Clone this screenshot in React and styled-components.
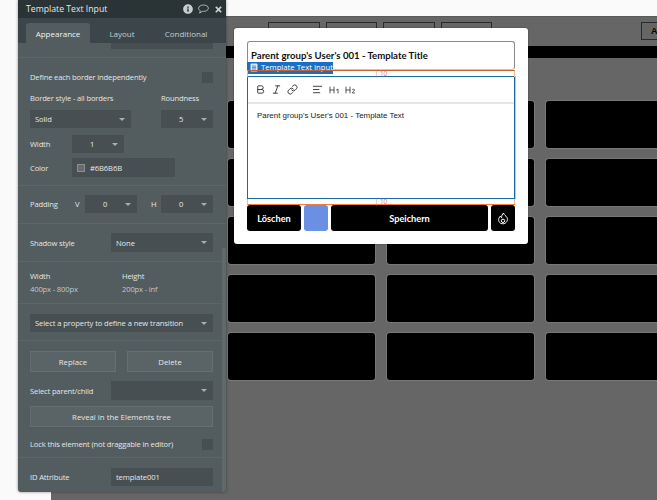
import styled, { createGlobalStyle } from 'styled-components'
import { Bold, Italic, Link, AlignLeft, Heading1, Heading2 } from 'lucide-react'
import { FaInfoCircle, FaTimes } from 'react-icons/fa'

const GlobalStyle = createGlobalStyle`
  html, body {
    margin: 0;
    padding: 0;
    background: #fafafa;
  }
  * {
    box-sizing: border-box;
  }
`;

const Page = styled.div`
  position: relative;
  width: 657px;
  height: 500px;
  overflow: hidden;
  padding: 16px 0 0 51px;
  background: #fafafa;
`;

/* editor canvas behind the floating windows */
const Canvas = styled.div`
  height: 484px;
  background: #666;
  border-top: 1px solid #5a5a5a;
`;

const TopRow = styled.div`
  display: flex;
  gap: 6px;
  height: 29px;
  padding: 5px 0 0 217px;
`;

const TopButton = styled.div`
  width: ${p => p.$w || 51.5}px;
  height: 18px;
  margin-left: ${p => p.$ml || 0}px;
  flex-shrink: 0;
  border: 1px solid #2b2b2b;
  font: bold 9px "Liberation Sans", sans-serif;
  line-height: 16px;
  padding-left: 9px;
  color: #000;
`;

const BlackBar = styled.div`
  height: 12px;
  background: #000;
`;

const CardGrid = styled.div`
  display: grid;
  grid-template-columns: repeat(3, 147px);
  grid-auto-rows: 47px;
  gap: 11px 12px;
  margin-top: 43px;
  padding-left: 177px;
`;

const Card = styled.div`
  background: #000;
  border-radius: 3px;
  box-shadow: 0 0 0 1px #777;
`;

/* property editor palette */
const Panel = styled.div`
  position: absolute;
  left: 18px;
  top: 0;
  width: 208px;
  height: 492px;
  display: flex;
  flex-direction: column;
  background: #535c5f;
  border-radius: 0 0 3px 3px;
  box-shadow: 0 0 3px rgba(0, 0, 0, 0.45);
  font-family: "Open Sans", sans-serif;
  color: #e4e7e7;
  overflow: hidden;
`;

const PanelHeader = styled.div`
  display: flex;
  align-items: center;
  height: 18px;
  flex-shrink: 0;
  padding: 0 3px 0 8px;
  background: #2a3437;
  font-size: 8.7px;
`;

const PanelTitle = styled.span`
  flex: 1;
`;

const HeaderIcons = styled.div`
  display: flex;
  align-items: center;
  gap: 5px;
  color: #c9cfcf;
`;

const Tabs = styled.div`
  display: flex;
  height: 25px;
  flex-shrink: 0;
  padding: 5px 0 0 8px;
  background: #3c464a;
`;

const Tab = styled.div`
  width: ${p => p.$w}px;
  display: flex;
  align-items: center;
  justify-content: center;
  font-size: 8px;
  border-radius: 3px 3px 0 0;
  background: ${p => (p.$active ? '#535c5f' : 'transparent')};
  color: ${p => (p.$active ? '#f0f2f2' : '#c4caca')};
`;

const Section = styled.div`
  display: flex;
  flex-direction: column;
  height: ${p => p.$h}px;
  flex-shrink: 0;
  padding: ${p => p.$top}px 13px 0 12px;
  border-bottom: 1px solid #5c6568;
`;

const Row = styled.div`
  display: flex;
  align-items: center;
  flex-shrink: 0;
  justify-content: ${p => (p.$between ? 'space-between' : 'flex-start')};
  margin-top: ${p => p.$mt || 0}px;
`;

const Label = styled.span`
  width: ${p => (p.$w ? `${p.$w}px` : 'auto')};
  margin-left: ${p => p.$ml || 0}px;
  flex-shrink: 0;
  font-size: 7.6px;
  letter-spacing: -0.15px;
  line-height: 12px;
  color: ${p => (p.$dim ? '#c2c8c8' : '#e4e7e7')};
`;

const Field = styled.div`
  position: relative;
  width: ${p => p.$w}px;
  height: ${p => p.$h || 18}px;
  flex-shrink: 0;
  display: flex;
  align-items: center;
  justify-content: ${p => (p.$center ? 'center' : 'flex-start')};
  padding: ${p => (p.$center ? '0 12px 0 0' : '0 0 0 5px')};
  background: #474f52;
  font-size: 7.6px;
  letter-spacing: -0.1px;
  color: #e4e7e7;
`;

// dropdown: a field with a small caret on the right
const Select = styled(Field)`
  &::after {
    content: '';
    position: absolute;
    right: 6px;
    top: 8px;
    border-style: solid;
    border-width: 3px 3px 0 3px;
    border-color: #a9afb0 transparent transparent transparent;
  }
`;

const ClippedField = styled.div`
  width: 102px;
  height: 6px;
  margin-left: 81px;
  background: #474f52;
`;

const Checkbox = styled.div`
  width: 11px;
  height: 11px;
  background: #474f52;
`;

const Swatch = styled.span`
  width: 8px;
  height: 8px;
  margin-right: 5px;
  background: #6b6b6b;
  border: 1px solid #8a9092;
`;

const ActionButton = styled.div`
  flex: 1;
  height: 21px;
  display: flex;
  align-items: center;
  justify-content: center;
  background: #5a6366;
  border: 1px solid #656e71;
  font-size: 7.8px;
`;

const ActionRow = styled(Row)`
  gap: 11px;
`;

const ScrollThumb = styled.div`
  position: absolute;
  right: 0;
  top: 248px;
  bottom: 0;
  width: 4px;
  background: #5f686b;
`;

/* popup opened over the canvas */
const Modal = styled.div`
  position: absolute;
  left: 234px;
  top: 28px;
  width: 294px;
  height: 216px;
  display: flex;
  flex-direction: column;
  padding: 13px;
  background: #fff;
  border-radius: 3px;
  box-shadow: 0 0 2px rgba(0, 0, 0, 0.4);
`;

const TitleInput = styled.div`
  height: 29px;
  flex-shrink: 0;
  padding: 7px 0 0 3px;
  border: 1px solid #8b8b8b;
  border-bottom-color: #c9c9c9;
  border-radius: 3px;
  font: 700 9.6px "Lato", sans-serif;
  line-height: 14px;
  color: #111;
`;

const Editor = styled.div`
  position: relative;
  height: 123px;
  flex-shrink: 0;
  margin-top: 6px;
  border: 1px solid #1b6aa5;
  box-shadow: 1px 0 0 #f5b48c;
`;

const EditorTools = styled.div`
  display: flex;
  align-items: center;
  height: 27px;
  padding-left: 7px;
  border-bottom: 2px solid #e6e6e6;
  color: #333;
`;

const Tool = styled.span`
  display: flex;
  width: ${p => p.$w || 16}px;
`;

const EditorText = styled.div`
  padding: 6px 0 0 9px;
  font: 7.95px "Liberation Sans", sans-serif;
  line-height: 12px;
  color: #222;
`;

const SelectionTag = styled.div`
  position: absolute;
  left: -1px;
  top: -15px;
  width: 86px;
  height: 12px;
  display: flex;
  align-items: center;
  gap: 3px;
  padding: 0 0 2px 3px;
  background: #1a6fc4;
  font: 7.7px "Open Sans", sans-serif;
  white-space: nowrap;
  color: #fff;
`;

// margin guides drawn above and below the selected element
const MarginGuide = styled.div`
  position: absolute;
  left: -1px;
  right: -1px;
  height: ${p => (p.$below ? 6 : 7)}px;
  display: flex;
  justify-content: center;
  font: 6.5px "Open Sans", sans-serif;
  line-height: 6px;
  color: #ee7d3c;
  border-left: 1px solid #f5b48c;
  border-right: 1px solid #f5b48c;
  ${p => (p.$below
    ? 'top: 122px; border-bottom: 1px solid #ee7d3c;'
    : 'top: -7px; border-top: 1px solid #c9622a;')}
`;

const ButtonRow = styled.div`
  display: flex;
  gap: 3px;
  height: 27px;
  margin-top: 6px;
`;

const DarkButton = styled.div`
  flex: ${p => (p.$grow ? 1 : 'none')};
  width: ${p => (p.$grow ? 'auto' : `${p.$w}px`)};
  display: flex;
  align-items: center;
  justify-content: center;
  background: #000;
  border-radius: 3px;
  font: 700 9.2px "Lato", sans-serif;
  color: #fff;
`;

const ColorButton = styled.div`
  width: 24px;
  background: #6a8fe3;
  border-radius: 3px;
`;

const BubbleIcon = () => (
  <svg width="11" height="10" viewBox="0 0 11 10" fill="none" stroke="currentColor" strokeWidth="0.8">
    <path d="M5.5 1C8 1 10.4 2.2 10.4 4.2S8 7.4 5.5 7.4c-.5 0-.9 0-1.3-.1C3.4 8.2 2.4 8.8 1.4 9c.5-.6.9-1.3 1-2.1C1.3 6.3.6 5.3.6 4.200.6 2.200 3 1 5.500 1z" />
  </svg>
);

const DocIcon = () => (
  <svg width="8" height="9" viewBox="0 0 8 9">
    <rect x="0.5" y="0.5" width="7" height="8" rx="1" fill="#dbe9f7" />
    <path d="M2 3h4M2 4.500h4M2 6h4" stroke="#1a6fc4" strokeWidth="0.7" />
  </svg>
);

const FireIcon = () => (
  <svg width="12" height="13" viewBox="0 0 12 13" fill="none" stroke="#fff" strokeWidth="1">
    <path d="M6.5 1C6.800 3 9 3.600 10 5.500 11.300 8.300 9.300 11.800 6 11.800 3 11.800 1 9.500 1.800 6.500 2.100 5.400 2.800 4.600 3.500 4 3.600 5 4 5.500 4.600 5.800 4.600 4 5.200 2.200 6.500 1Z" />
    <circle cx="6" cy="8.800" r="1.700" />
  </svg>
);

const cardKeys = Array.from({ length: 15 }, (_, i) => i);

const App = () => {
  return (
    <Page>
      <GlobalStyle />
      <Canvas>
        <TopRow>
          <TopButton />
          <TopButton />
          <TopButton />
          <TopButton />
          <TopButton $ml={143} $w={30}>A</TopButton>
        </TopRow>
        <BlackBar />
        <CardGrid>
          {cardKeys.map(k => <Card key={k} />)}
        </CardGrid>
      </Canvas>

      <Panel>
        <PanelHeader>
          <PanelTitle>Template Text Input</PanelTitle>
          <HeaderIcons>
            <FaInfoCircle size={10} />
            <BubbleIcon />
            <FaTimes size={9} />
          </HeaderIcons>
        </PanelHeader>
        <Tabs>
          <Tab $w={64} $active>Appearance</Tab>
          <Tab $w={64}>Layout</Tab>
          <Tab $w={64}>Conditional</Tab>
        </Tabs>

        <Section $h={15} $top={0}>
          <ClippedField />
        </Section>

        <Section $h={128} $top={13}>
          <Row $between>
            <Label>Define each border independently</Label>
            <Checkbox />
          </Row>
          <Row $mt={9}>
            <Label $w={131}>Border style - all borders</Label>
            <Label>Roundness</Label>
          </Row>
          <Row $mt={6} $between>
            <Select $w={101}>Solid</Select>
            <Select $w={52} $center>5</Select>
          </Row>
          <Row $mt={7}>
            <Label $w={42}>Width</Label>
            <Select $w={52} $center>1</Select>
          </Row>
          <Row $mt={5}>
            <Label $w={42}>Color</Label>
            <Field $w={103} $h={19}><Swatch />#6B6B6B</Field>
          </Row>
        </Section>

        <Section $h={38} $top={9}>
          <Row>
            <Label $w={45}>Padding</Label>
            <Label $w={10}>V</Label>
            <Select $w={52} $center>0</Select>
            <Label $w={10} $ml={14}>H</Label>
            <Select $w={52} $center>0</Select>
          </Row>
        </Section>

        <Section $h={38} $top={9}>
          <Row>
            <Label $w={81}>Shadow style</Label>
            <Select $w={102} $h={19}>None</Select>
          </Row>
        </Section>

        <Section $h={42} $top={8}>
          <Row>
            <Label $w={92}>Width</Label>
            <Label>Height</Label>
          </Row>
          <Row $mt={1}>
            <Label $w={92} $dim>400px - 800px</Label>
            <Label $dim>200px - inf</Label>
          </Row>
        </Section>

        <Section $h={37} $top={10}>
          <Select $w={183}>Select a property to define a new transition</Select>
        </Section>

        <Section $h={117} $top={10}>
          <ActionRow>
            <ActionButton>Replace</ActionButton>
            <ActionButton>Delete</ActionButton>
          </ActionRow>
          <Row $mt={9}>
            <Label $w={81}>Select parent/child</Label>
            <Select $w={102} $h={19} />
          </Row>
          <Row $mt={6}>
            <ActionButton>Reveal in the Elements tree</ActionButton>
          </Row>
          <Row $mt={11} $between>
            <Label>Lock this element (not draggable in editor)</Label>
            <Checkbox />
          </Row>
        </Section>

        <Section $h={35} $top={10}>
          <Row>
            <Label $w={81}>ID Attribute</Label>
            <Field $w={102}>template001</Field>
          </Row>
        </Section>
        <ScrollThumb />
      </Panel>

      <Modal>
        <TitleInput>Parent group's User's 001 - Template Title</TitleInput>
        <Editor>
          <SelectionTag><DocIcon />Template Text Input</SelectionTag>
          <MarginGuide>| 10</MarginGuide>
          <EditorTools>
            <Tool><Bold size={11} strokeWidth={2} /></Tool>
            <Tool><Italic size={11} strokeWidth={2} /></Tool>
            <Tool $w={25}><Link size={11} strokeWidth={2} /></Tool>
            <Tool><AlignLeft size={11} strokeWidth={2} /></Tool>
            <Tool><Heading1 size={12} strokeWidth={1.6} /></Tool>
            <Tool><Heading2 size={12} strokeWidth={1.6} /></Tool>
          </EditorTools>
          <EditorText>Parent group's User's 001 - Template Text</EditorText>
          <MarginGuide $below>| 10</MarginGuide>
        </Editor>
        <ButtonRow>
          <DarkButton $w={54}>Löschen</DarkButton>
          <ColorButton />
          <DarkButton $grow>Speichern</DarkButton>
          <DarkButton $w={24}><FireIcon /></DarkButton>
        </ButtonRow>
      </Modal>
    </Page>
  )
}

export default App
